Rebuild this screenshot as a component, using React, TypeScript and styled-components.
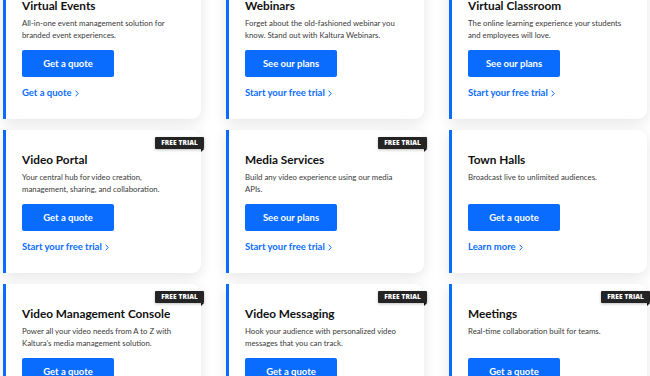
import React from 'react';
import styled, { createGlobalStyle } from 'styled-components';

const GlobalStyle = createGlobalStyle`
  html, body {
    margin: 0;
    padding: 0;
    background: #ffffff;
    overflow: hidden;
  }
  * {
    box-sizing: border-box;
  }
`;

const Page = styled.div`
  width: 650px;
  height: 376px;
  overflow: hidden;
  font-family: Lato, "Open Sans", sans-serif;
`;

// page is scrolled, so the first row starts above the viewport
const Grid = styled.div`
  display: grid;
  grid-template-columns: repeat(3, 198px);
  column-gap: 25px;
  row-gap: 11px;
  padding-left: 3px;
  margin-top: -24px;
`;

const Card = styled.div`
  position: relative;
  height: 143px;
  background: #ffffff;
  border-left: 3px solid #0a6cff;
  border-radius: 0 9px 9px 0;
  box-shadow: 0 4px 14px rgba(0, 0, 0, 0.1);
  padding: 22px 16px 0 16px;
  display: flex;
  flex-direction: column;
  align-items: flex-start;
`;

const Badge = styled.div`
  position: absolute;
  top: 7px;
  right: -3px;
  height: 12px;
  padding: 0 6px;
  background: #242424;
  color: #ffffff;
  font-family: "Open Sans", sans-serif;
  font-size: 6.5px;
  font-weight: 800;
  line-height: 12px;
  letter-spacing: 0.1px;
  border-radius: 1px;
  box-shadow: 0 1px 3px rgba(0, 0, 0, 0.25);

  &::after {
    content: '';
    position: absolute;
    right: 0;
    bottom: -3px;
    border-top: 3px solid #111;
    border-right: 3px solid transparent;
  }
`;

const Title = styled.h3`
  margin: 0;
  font-size: 11.8px;
  font-weight: 700;
  line-height: 16px;
  color: #111111;
`;

const Desc = styled.p`
  margin: 3px 0 0 0;
  min-height: 24px;
  font-size: 7.8px;
  line-height: 12px;
  color: #3a3a3a;
`;

const Button = styled.a`
  margin-top: 9px;
  width: 92px;
  height: 27px;
  display: flex;
  align-items: center;
  justify-content: center;
  background: #0a6cff;
  border-radius: 2px;
  color: #ffffff;
  font-size: 9.5px;
  font-weight: 700;
`;

const LinkRow = styled.a`
  margin-top: 10px;
  display: flex;
  align-items: center;
  gap: 3px;
  font-size: 9.5px;
  font-weight: 700;
  line-height: 12px;
  color: #0a6cff;
`;

const Chevron = () => (
  <svg width="4" height="7" viewBox="0 0 4 7" fill="none">
    <path d="M0.6 0.7 L3.2 3.5 L0.6 6.3" stroke="#0a6cff" strokeWidth="1" />
  </svg>
);

const cards = [
  {
    title: 'Virtual Events',
    desc: 'All-in-one event management solution for branded event experiences.',
    button: 'Get a quote',
    link: 'Get a quote',
    trial: false,
  },
  {
    title: 'Webinars',
    desc: 'Forget about the old-fashioned webinar you know. Stand out with Kaltura Webinars.',
    button: 'See our plans',
    link: 'Start your free trial',
    trial: false,
  },
  {
    title: 'Virtual Classroom',
    desc: 'The online learning experience your students and employees will love.',
    button: 'See our plans',
    link: 'Start your free trial',
    trial: false,
  },
  {
    title: 'Video Portal',
    desc: 'Your central hub for video creation, management, sharing, and collaboration.',
    button: 'Get a quote',
    link: 'Start your free trial',
    trial: true,
  },
  {
    title: 'Media Services',
    desc: 'Build any video experience using our media APIs.',
    button: 'See our plans',
    link: 'Start your free trial',
    trial: true,
  },
  {
    title: 'Town Halls',
    desc: 'Broadcast live to unlimited audiences.',
    button: 'Get a quote',
    link: 'Learn more',
    trial: false,
  },
  {
    title: 'Video Management Console',
    desc: 'Power all your video needs from A to Z with Kaltura’s media management solution.',
    button: 'Get a quote',
    link: 'Start your free trial',
    trial: true,
  },
  {
    title: 'Video Messaging',
    desc: 'Hook your audience with personalized video messages that you can track.',
    button: 'Get a quote',
    link: 'Start your free trial',
    trial: true,
  },
  {
    title: 'Meetings',
    desc: 'Real-time collaboration built for teams.',
    button: 'Get a quote',
    link: 'Start your free trial',
    trial: true,
  },
];

const App: React.FC = () => {
  return (
    <Page>
      <GlobalStyle />
      <Grid>
        {cards.map((card, index) => (
          <Card key={index}>
            {card.trial && <Badge>FREE TRIAL</Badge>}
            <Title>{card.title}</Title>
            <Desc>{card.desc}</Desc>
            <Button>{card.button}</Button>
            <LinkRow>
              {card.link}
              <Chevron />
            </LinkRow>
          </Card>
        ))}
      </Grid>
    </Page>
  );
};

export default App;
